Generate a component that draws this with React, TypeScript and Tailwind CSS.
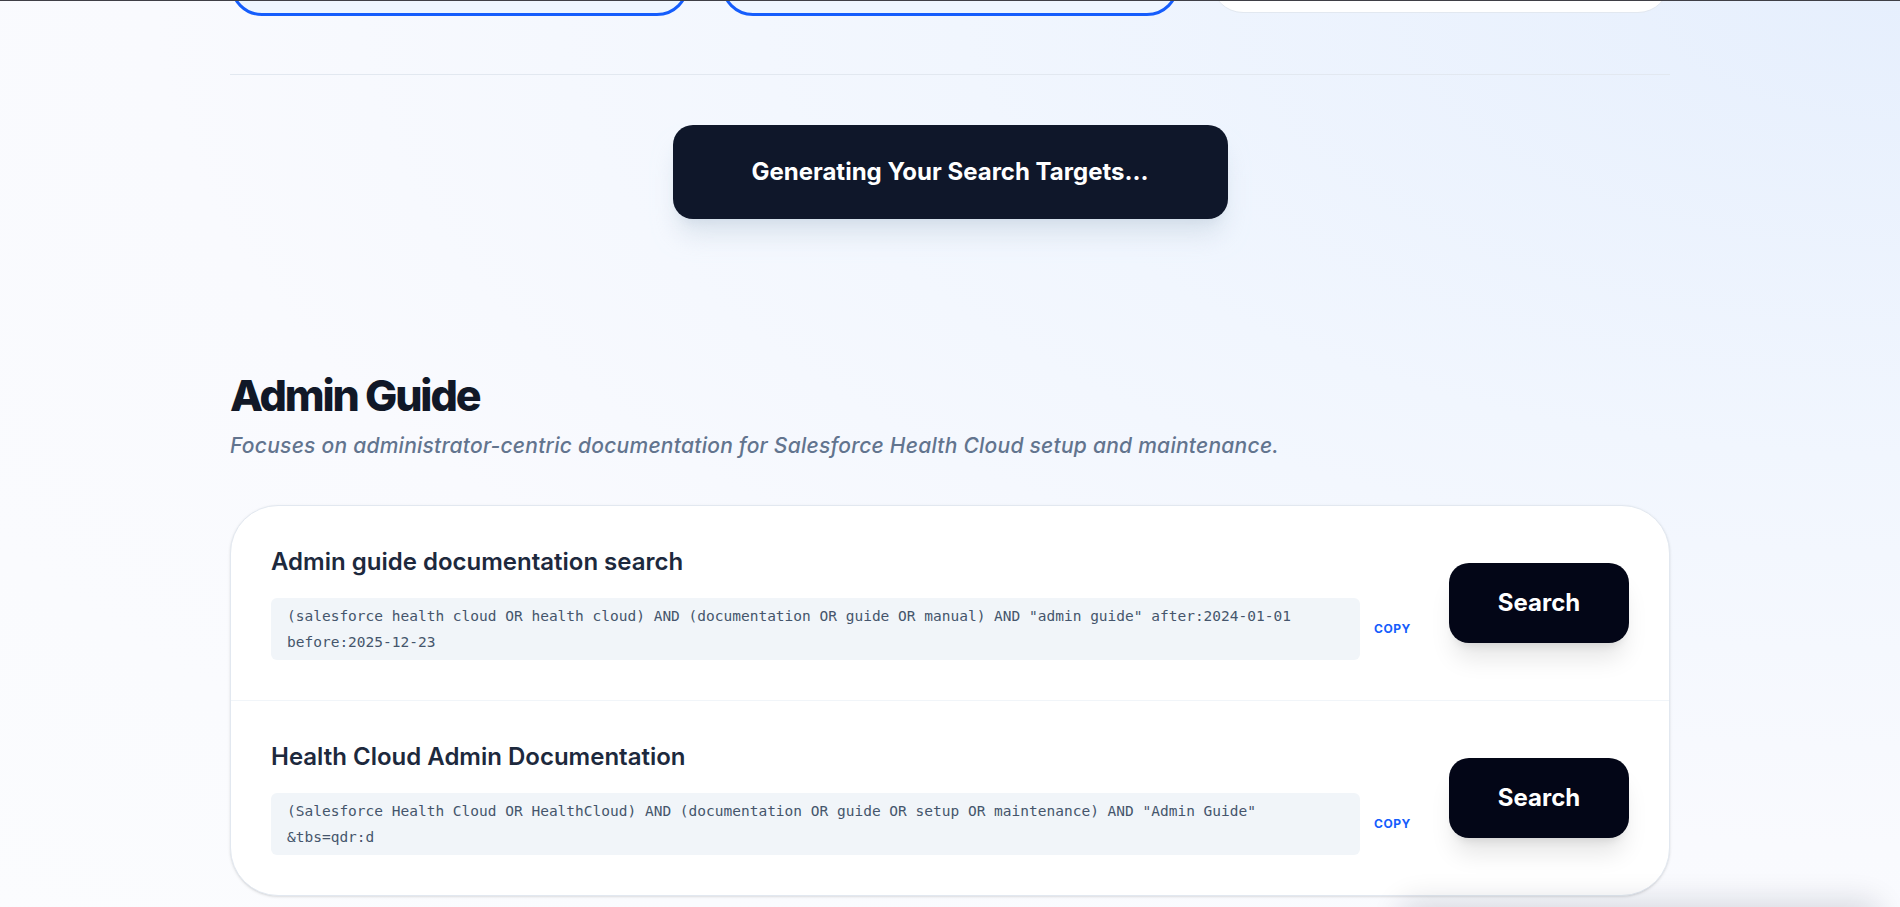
import React from 'react';

type Target = {
  title: string;
  query: string;
};

const targets: Target[] = [
  {
    title: 'Admin guide documentation search',
    query:
      '(salesforce health cloud OR health cloud) AND (documentation OR guide OR manual) AND "admin guide" after:2024-01-01 before:2025-12-23',
  },
  {
    title: 'Health Cloud Admin Documentation',
    query:
      '(Salesforce Health Cloud OR HealthCloud) AND (documentation OR guide OR setup OR maintenance) AND "Admin Guide" &tbs=qdr:d',
  },
];

function TargetRow({ item, last }: { item: Target; last: boolean }) {
  return (
    <div className={`flex items-center gap-[38px] px-10 py-10 ${last ? '' : 'border-b border-slate-100'}`}>
      <div className="flex-1 min-w-0">
        <h3 className="text-2xl leading-8 font-semibold text-slate-800 mb-5">{item.title}</h3>
        <div className="flex items-center gap-[14px]">
          <div className="flex-1 rounded-md bg-slate-100 pl-4 pr-8 py-[5px] font-['DejaVu_Sans_Mono',monospace] text-[14.5px] leading-[26px] text-slate-600">
            {item.query}
          </div>
          <button className="text-xs font-bold tracking-wider text-blue-600">COPY</button>
        </div>
      </div>
      <button className="w-[180px] h-[80px] shrink-0 rounded-[20px] bg-[#030617] text-white text-2xl font-bold shadow-xl">
        Search
      </button>
    </div>
  );
}

export default function App() {
  return (
    <div className="relative min-h-screen overflow-hidden font-['Inter',sans-serif] bg-[#fafbfe] bg-[radial-gradient(ellipse_at_top_right,#e6effd_0%,#f1f6fe_35%,#f9fafe_65%,#fbfcfe_100%)]">
      {/* top edge line */}
      <div className="fixed top-0 left-0 right-0 h-px bg-[#3f3f46] z-20" />

      <div className="mx-auto w-[1440px] pb-6">
        {/* option cards (scrolled past) */}
        <div className="-mt-[84px] grid grid-cols-3 gap-8 items-start">
          <div className="h-[100px] rounded-[32px] border-[3px] border-blue-600 bg-blue-50" />
          <div className="h-[100px] rounded-[32px] border-[3px] border-blue-600 bg-blue-50" />
          <div className="h-[97px] rounded-[32px] border border-slate-200 bg-white" />
        </div>

        <div className="mt-[58px] border-t border-slate-200" />

        <div className="mt-[50px] flex justify-center">
          <button className="w-[555px] h-[94px] rounded-[20px] bg-[#0f172a] text-white text-2xl font-bold shadow-xl shadow-slate-300/60">
            Generating Your Search Targets...
          </button>
        </div>

        {/* Admin Guide section */}
        <section className="mt-[150px]">
          <h2 className="text-[43px] leading-[52px] font-extrabold tracking-tighter text-[#111827]">Admin Guide</h2>
          <p className="mt-[11px] text-[21px] leading-7 font-medium italic tracking-[0.012em] text-slate-500">
            Focuses on administrator-centric documentation for Salesforce Health Cloud setup and maintenance.
          </p>

          <div className="mt-[45px] rounded-[48px] border border-slate-200 bg-white shadow-sm overflow-hidden">
            {targets.map((t, i) => (
              <TargetRow key={t.title} item={t} last={i === targets.length - 1} />
            ))}
          </div>
        </section>
      </div>

      {/* floating panel just below the fold */}
      <div className="fixed right-[20px] bottom-[-100px] w-[480px] h-[100px] rounded-2xl bg-white shadow-[0_-6px_30px_rgba(15,23,42,0.14)]" />
    </div>
  );
}
